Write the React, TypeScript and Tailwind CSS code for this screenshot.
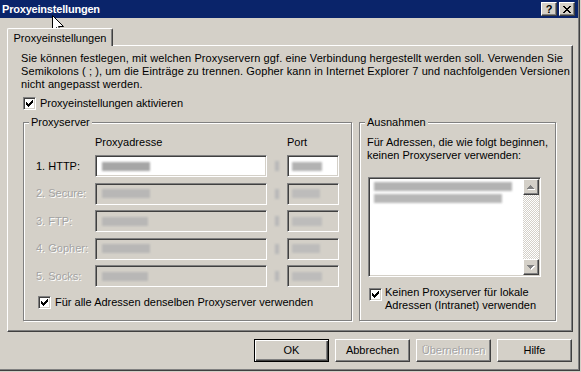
import React from "react";

const sunken =
  "border border-t-[#808080] border-l-[#808080] border-r-white border-b-white shadow-[inset_1px_1px_0_#404040,inset_-1px_-1px_0_#d4d0c8]";
const raised =
  "border border-t-white border-l-white border-r-[#404040] border-b-[#404040] shadow-[inset_-1px_-1px_0_#808080]";
const etched =
  "border border-[#808080] shadow-[inset_1px_1px_0_#ffffff,1px_1px_0_#ffffff]";
const disabledText = "text-[#a3a3a3] [text-shadow:1px_1px_0_#ffffff]";

function Check() {
  return (
    <div className={`w-[13px] h-[13px] shrink-0 bg-white flex items-center justify-center ${sunken}`}>
      <svg width="7" height="7" viewBox="0 0 7 7" shapeRendering="crispEdges">
        <path
          d="M6 0h1v1h-1z M5 1h2v1h-2z M0 2h1v1h-1z M4 2h3v1h-3z M0 3h2v1h-2z M3 3h3v1h-3z M0 4h5v1h-5z M1 5h3v1h-3z M2 6h1v1h-1z"
          fill="#000"
        />
      </svg>
    </div>
  );
}

function Blob({ w, tone = "#8e8e8e" }: { w: number; tone?: string }) {
  return (
    <div className="h-[9px] blur-[1px] opacity-80" style={{ width: w, background: tone }} />
  );
}

function Row({
  label,
  enabled,
  a,
  p,
}: {
  label: string;
  enabled?: boolean;
  a: number;
  p: number;
}) {
  return (
    <div className="flex items-center h-[22px]">
      <div className={`w-[59px] whitespace-nowrap ${enabled ? "" : disabledText}`}>{label}</div>
      <div
        className={`w-[172px] h-[22px] flex items-center pl-[6px] ${sunken} ${
          enabled ? "bg-white" : "bg-[#d4d0c8]"
        }`}
      >
        <Blob w={a} tone={enabled ? "#909090" : "#b2b2b2"} />
      </div>
      <div className="w-[20px] flex justify-center">
        <div className="w-[4px] h-[10px] bg-[#b8b8b8] blur-[1px]" />
      </div>
      <div
        className={`w-[52px] h-[22px] flex items-center pl-[4px] ${sunken} ${
          enabled ? "bg-white" : "bg-[#d4d0c8]"
        }`}
      >
        <Blob w={p} tone={enabled ? "#a0a0a0" : "#b8b8b8"} />
      </div>
    </div>
  );
}

function Btn({
  children,
  def,
  disabled,
}: {
  children: React.ReactNode;
  def?: boolean;
  disabled?: boolean;
}) {
  const cls = def
    ? "border border-black shadow-[inset_1px_1px_0_#ffffff,inset_-1px_-1px_0_#404040,inset_-2px_-2px_0_#808080]"
    : raised;
  return (
    <div
      className={`w-[75px] h-[23px] flex items-center justify-center bg-[#d4d0c8] ${cls} ${
        disabled ? disabledText : ""
      }`}
    >
      {children}
    </div>
  );
}

const upArrow = "M3 0h1v1H3z M2 1h3v1H2z M1 2h5v1H1z M0 3h7v1H0z";
const downArrow = "M0 0h7v1H0z M1 1h5v1H1z M2 2h3v1H2z M3 3h1v1H3z";

function ScrollBtn({ down }: { down?: boolean }) {
  return (
    <div className={`w-[16px] h-[16px] shrink-0 bg-[#d4d0c8] flex items-center justify-center ${raised}`}>
      <svg width="8" height="5" viewBox="0 0 8 5" shapeRendering="crispEdges">
        <path transform="translate(1,1)" d={down ? downArrow : upArrow} fill="#ffffff" />
        <path d={down ? downArrow : upArrow} fill="#808080" />
      </svg>
    </div>
  );
}

export default function App() {
  return (
    <div className="w-[581px] h-[372px] bg-[#d4d0c8] overflow-hidden relative font-['Liberation_Sans',Arial,sans-serif] text-[11px] leading-[13px] text-black">
      <div className="w-[580px] h-[371px] border-r border-b border-[#404040]">
        <div className="h-full border-r border-b border-[#808080] flex flex-col">
          {/* Title bar */}
          <div className="h-[18px] shrink-0 bg-[#0a246a] flex items-center pl-[2px] pr-[3px]">
            <span className="flex-1 text-white font-bold text-[11px] leading-[18px] tracking-[-0.2px]">
              Proxyeinstellungen
            </span>
            <div className={`w-[16px] h-[14px] bg-[#d4d0c8] flex items-center justify-center font-bold text-[11px] leading-[12px] ${raised}`}>
              ?
            </div>
            <div className={`ml-[2px] w-[16px] h-[14px] bg-[#d4d0c8] flex items-center justify-center ${raised}`}>
              <svg width="8" height="7" viewBox="0 0 8 7" shapeRendering="crispEdges">
                <path
                  d="M0 0h2v1H0z M6 0h2v1H6z M1 1h2v1H1z M5 1h2v1H5z M2 2h4v1H2z M3 3h2v1H3z M2 4h4v1H2z M1 5h2v1H1z M5 5h2v1H5z M0 6h2v1H0z M6 6h2v1H6z"
                  fill="#000"
                />
              </svg>
            </div>
          </div>

          <div className="pl-[7px] pt-[10px] flex flex-col">
            {/* Tab */}
            <div className="relative z-10 -mb-px w-[106px] h-[18px] bg-[#d4d0c8] border-t border-l border-white border-r border-r-[#404040] rounded-t-[2px] shadow-[inset_-1px_0_0_#808080] flex items-start justify-center pt-[3px]">
              Proxyeinstellungen
            </div>

            {/* Panel */}
            <div className="w-[566px] h-[287px] border-t border-l border-white border-r border-b border-r-[#404040] border-b-[#404040] shadow-[inset_-1px_-1px_0_#808080] pl-[13px] pt-[6px] flex flex-col">
              <p className="whitespace-nowrap tracking-[0.1px]">
                Sie können festlegen, mit welchen Proxyservern ggf. eine Verbindung hergestellt werden soll. Verwenden Sie
                <br />
                Semikolons ( ; ), um die Einträge zu trennen. Gopher kann in Internet Explorer 7 und nachfolgenden Versionen
                <br />
                nicht angepasst werden.
              </p>

              <div className="mt-[6px] ml-[2px] flex items-center gap-[4px] h-[13px]">
                <Check />
                <span>Proxyeinstellungen aktivieren</span>
              </div>

              <div className="mt-[12px] ml-[2px] flex">
                {/* Proxyserver group */}
                <div className={`relative w-[329px] h-[199px] ${etched} pt-[13px] pl-[12px] flex flex-col`}>
                  <span className="absolute left-[5px] top-[-7px] px-[2px] bg-[#d4d0c8]">Proxyserver</span>
                  <div className="flex h-[13px]">
                    <div className="w-[59px]" />
                    <div className="w-[192px]">Proxyadresse</div>
                    <div>Port</div>
                  </div>
                  <div className="mt-[6px] flex flex-col gap-[5.5px]">
                    <Row label="1. HTTP:" enabled a={48} p={30} />
                    <Row label="2. Secure:" a={48} p={28} />
                    <Row label="3. FTP:" a={46} p={30} />
                    <Row label="4. Gopher:" a={48} p={28} />
                    <Row label="5. Socks:" a={46} p={30} />
                  </div>
                  <div className="mt-[9px] ml-[2px] flex items-center gap-[4px] h-[13px]">
                    <Check />
                    <span>Für alle Adressen denselben Proxyserver verwenden</span>
                  </div>
                </div>

                {/* Ausnahmen group */}
                <div className={`relative ml-[7px] w-[197px] h-[199px] ${etched} pt-[13px] pl-[7px] flex flex-col`}>
                  <span className="absolute left-[5px] top-[-7px] px-[2px] bg-[#d4d0c8]">Ausnahmen</span>
                  <p className="whitespace-nowrap">
                    Für Adressen, die wie folgt beginnen,
                    <br />
                    keinen Proxyserver verwenden:
                  </p>
                  <div className={`mt-[15px] ml-[1px] w-[173px] h-[100px] bg-white flex ${sunken}`}>
                    <div className="flex-1 pl-[5px] pt-[4px] flex flex-col gap-[3px]">
                      <Blob w={138} tone="#a0a0a0" />
                      <Blob w={128} tone="#a6a6a6" />
                    </div>
                    <div className="w-[16px] my-[1px] mr-[1px] flex flex-col">
                      <ScrollBtn />
                      <div className="flex-1 bg-[image:repeating-conic-gradient(#d4d0c8_0%_25%,#ffffff_0%_50%)] bg-[length:2px_2px]" />
                      <ScrollBtn down />
                    </div>
                  </div>
                  <div className="mt-[11px] ml-[2px] flex items-start gap-[3px]">
                    <Check />
                    <span className="-mt-[2px] whitespace-nowrap">
                      Keinen Proxyserver für lokale
                      <br />
                      Adressen (Intranet) verwenden
                    </span>
                  </div>
                </div>
              </div>
            </div>

            {/* Buttons */}
            <div className="mt-[7px] pl-[247px] flex gap-[6px]">
              <Btn def>OK</Btn>
              <Btn>Abbrechen</Btn>
              <Btn disabled>Übernehmen</Btn>
              <Btn>Hilfe</Btn>
            </div>
          </div>
        </div>
      </div>

      {/* Mouse cursor */}
      <svg className="absolute left-[52px] top-[15px]" width="12" height="19" viewBox="0 0 12 19">
        <polygon
          points="0.5,0.5 0.5,16.5 4.5,12.5 7.5,18.5 9.5,17.5 6.5,11.5 11.5,11.5"
          fill="#ffffff"
          stroke="#000000"
          strokeWidth="1"
        />
      </svg>
    </div>
  );
}
